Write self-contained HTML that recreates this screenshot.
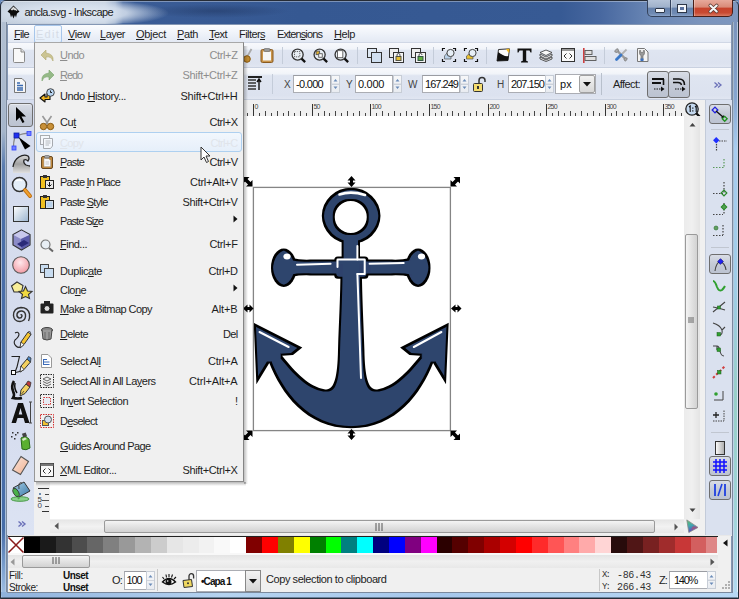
<!DOCTYPE html><html><head><meta charset="utf-8"><style>
*{margin:0;padding:0;box-sizing:border-box}
html,body{width:739px;height:599px;overflow:hidden;background:#6b8cbd}
body{position:relative;font-family:"Liberation Sans",sans-serif;font-size:11px;color:#000}
.a{position:absolute}
.t{position:absolute;white-space:nowrap;letter-spacing:-0.5px;line-height:13px;font-size:11px}
.u{text-decoration:underline}
svg{position:absolute;overflow:visible}
.tb{background:linear-gradient(#f7f8fc 0,#eef1f8 30%,#dde3f0 45%,#d9e0ee 100%)}
</style></head><body><div class="a" style="left:0px;top:0px;width:739px;height:599px;background:#3b5c96;border:1px solid #262c36;border-radius:6px 6px 0 0"></div>
<div class="a" style="left:1px;top:1px;width:737px;height:23px;background:linear-gradient(90deg,#c3cedc 0,#c6d1df 104px,#9db0cc 114px,#4a6aa0 122px,#3a5c96 134px,#355892 300px,#375a94 560px,#4868a0 600px,#6a87b5 650px,#7b94bc 700px,#7e97be 739px);border-radius:5px 5px 0 0"></div>
<div class="a" style="left:1px;top:1px;width:737px;height:1px;background:rgba(255,255,255,.35);border-radius:5px 5px 0 0"></div>
<div class="a" style="left:140px;top:4px;width:150px;height:14px;background:radial-gradient(ellipse at center,rgba(20,35,70,.35),rgba(20,35,70,0) 70%)"></div>
<div class="a" style="left:1px;top:22px;width:6px;height:576px;background:linear-gradient(#b2c0d2 0,#a5b5cb 19%,#5a7cb0 25%,#4a6ea8 32%,#466ca8 88%,#7ea2d0 95%,#a6c4e6 100%)"></div>
<div class="a" style="left:1px;top:22px;width:1px;height:576px;background:linear-gradient(#c0cad8,#9fb4d0 50%,#b8d0ec)"></div>
<div class="a" style="left:5px;top:22px;width:1px;height:576px;background:linear-gradient(#b8c4d4,#98aac2 50%,#b0c8e4)"></div>
<div class="a" style="left:6px;top:22px;width:1px;height:570px;background:#7b899d"></div>
<div class="a" style="left:732px;top:22px;width:6px;height:576px;background:linear-gradient(#7b94bc 0,#86a6d0 13%,#a8cdf0 22%,#a0cde8 45%,#98cfc8 65%,#a0d4d8 85%,#b4daf2 100%)"></div>
<div class="a" style="left:732px;top:22px;width:1px;height:570px;background:#7b899d"></div>
<div class="a" style="left:733px;top:22px;width:1px;height:576px;background:linear-gradient(#a0b4cc,#c8dcf0)"></div>
<div class="a" style="left:737px;top:22px;width:1px;height:576px;background:linear-gradient(#b8c8dc,#e6f2fc)"></div>
<div class="a" style="left:1px;top:592px;width:737px;height:6px;background:linear-gradient(90deg,#8fb2dc 0,#b5d3f0 30%,#a6c8ec 60%,#b8d8f4 100%);border-radius:0 0 4px 4px"></div>
<div class="a" style="left:7px;top:592px;width:726px;height:1px;background:#7b899d"></div>
<div class="a" style="left:1px;top:597px;width:737px;height:1px;background:rgba(40,50,70,.5)"></div>
<div class="a" style="left:2px;top:2px;width:200px;height:21px;background:radial-gradient(ellipse 95px 14px at 72px 11px,rgba(230,236,244,.95) 0,rgba(215,225,238,.85) 55%,rgba(190,205,225,0) 100%)"></div>
<svg style="left:7px;top:5px" width="13" height="14" viewBox="0 0 13 14"><path d="M6.5 0.5 L12.5 6.5 L10 8.5 L9 12.5 L8 10 L6.5 13.5 L5 10 L4 12.5 L3 8.5 L0.5 6.5Z" fill="#0c0c0c"/><path d="M6.5 1.5 L9.5 4.5 L8 5.5 L6.5 4.5 L5 5.5 L3.5 4.5Z" fill="#d8d8d8"/><path d="M8 3 L10.5 5.5 L9 5.8Z" fill="#fff"/></svg>
<div class="t" style="left:24.5px;top:6px;font-size:11px;letter-spacing:-0.588px;color:#1b1b1b;font-family:'Liberation Sans',sans-serif;font-weight:normal;">ancla.svg - Inkscape</div>
<div class="a" style="left:647px;top:0px;width:47px;height:17px;border:1px solid #34425c;border-top:none;border-radius:0 0 0 5px;background:linear-gradient(#b4c3d8 0,#9fb1ca 45%,#6681ab 50%,#6f8ab3 85%,#8ba3c8 100%)"></div>
<div class="a" style="left:693px;top:0px;width:40px;height:17px;border:1px solid #4a1e18;border-top:none;border-radius:0 0 5px 0;background:linear-gradient(#e7aa9c 0,#d98a78 45%,#c7432c 50%,#c94a32 80%,#d97a62 100%)"></div>
<div class="a" style="left:670px;top:0px;width:1px;height:16px;background:#34425c"></div>
<div class="a" style="left:671px;top:0px;width:1px;height:16px;background:rgba(255,255,255,.3)"></div>
<div class="a" style="left:694px;top:0px;width:1px;height:16px;background:rgba(255,255,255,.3)"></div>
<div class="a" style="left:655px;top:8px;width:10px;height:5px;background:#f4f6fa;border:1px solid #2c3648;border-radius:1px"></div>
<div class="a" style="left:678px;top:5px;width:8px;height:7px;border:2px solid #f4f6fa;outline:1px solid #2c3648;background:#5a72a0"></div>
<svg style="left:708px;top:4px" width="11" height="9" viewBox="0 0 11 9"><path d="M2.3 1.5 L8.7 7.5 M8.7 1.5 L2.3 7.5" stroke="#5a3a34" stroke-width="3.6" stroke-linecap="round"/><path d="M2.3 1.5 L8.7 7.5 M8.7 1.5 L2.3 7.5" stroke="#f6f6f6" stroke-width="2.1" stroke-linecap="round"/></svg>
<div class="a" style="left:7px;top:24px;width:725px;height:568px;background:#f0f0f0;border-left:1px solid #8497b4;border-top:1px solid #8497b4;border-right:1px solid #8497b4"></div>
<div class="a" style="left:8px;top:25px;width:723px;height:18px;background:linear-gradient(#fbfcfe,#eef2f9 50%,#e2e8f3 100%)"></div>
<div class="a" style="left:8px;top:42px;width:723px;height:1px;background:#d0d7e5"></div>
<div class="a" style="left:34px;top:25px;width:28px;height:18px;border:1px solid #a7c6ea;border-radius:2px;background:linear-gradient(#f4f8fd,#e4eefa)"></div>
<div class="t" style="left:14px;top:28px;font-size:11px;letter-spacing:-0.681px;color:#1e1e1e;font-family:'Liberation Sans',sans-serif;font-weight:normal;"><span class="u">F</span>ile</div>
<div class="t" style="left:36px;top:28px;font-size:11px;letter-spacing:1.261px;color:#d6dce6;font-family:'Liberation Sans',sans-serif;font-weight:normal;"><span class="u">E</span>dit</div>
<div class="t" style="left:68px;top:28px;font-size:11px;letter-spacing:-0.411px;color:#1e1e1e;font-family:'Liberation Sans',sans-serif;font-weight:normal;"><span class="u">V</span>iew</div>
<div class="t" style="left:100px;top:28px;font-size:11px;letter-spacing:-0.503px;color:#1e1e1e;font-family:'Liberation Sans',sans-serif;font-weight:normal;"><span class="u">L</span>ayer</div>
<div class="t" style="left:136px;top:28px;font-size:11px;letter-spacing:-0.298px;color:#1e1e1e;font-family:'Liberation Sans',sans-serif;font-weight:normal;"><span class="u">O</span>bject</div>
<div class="t" style="left:177px;top:28px;font-size:11px;letter-spacing:-0.407px;color:#1e1e1e;font-family:'Liberation Sans',sans-serif;font-weight:normal;"><span class="u">P</span>ath</div>
<div class="t" style="left:209px;top:28px;font-size:11px;letter-spacing:-0.543px;color:#1e1e1e;font-family:'Liberation Sans',sans-serif;font-weight:normal;"><span class="u">T</span>ext</div>
<div class="t" style="left:239px;top:28px;font-size:11px;letter-spacing:-0.563px;color:#1e1e1e;font-family:'Liberation Sans',sans-serif;font-weight:normal;">Filter<span class="u">s</span></div>
<div class="t" style="left:277px;top:28px;font-size:11px;letter-spacing:-0.881px;color:#1e1e1e;font-family:'Liberation Sans',sans-serif;font-weight:normal;">Exten<span class="u">s</span>ions</div>
<div class="t" style="left:334px;top:28px;font-size:11px;letter-spacing:-0.405px;color:#1e1e1e;font-family:'Liberation Sans',sans-serif;font-weight:normal;"><span class="u">H</span>elp</div>
<div class="a" style="left:8px;top:43px;width:723px;height:25px;background:linear-gradient(#f8f9fc 0,#f1f4f9 24%,#dfe5f1 30%,#dce2ef 80%,#e2e7f2 100%)"></div>
<div class="a" style="left:8px;top:67px;width:723px;height:1px;background:#c9d1e0"></div>
<div class="a" style="left:8px;top:68px;width:723px;height:32px;background:linear-gradient(#f8f9fc 0,#f1f4f9 18%,#dfe5f1 24%,#dce2ef 85%,#e2e7f2 100%)"></div>
<div class="a" style="left:8px;top:99px;width:723px;height:1px;background:#c9d1e0"></div>
<svg style="left:12px;top:48px" width="14" height="15" viewBox="0 0 14 15"><path d="M1.5 0.5 H9 L12.5 4 V13.5 Q12.5 14.5 11.5 14.5 H2.5 Q1.5 14.5 1.5 13.5 Z" fill="#f8f8f8" stroke="#8a8a8a"/><path d="M9 0.5 V4 H12.5" fill="#ddd" stroke="#8a8a8a"/></svg>
<svg style="left:243px;top:48px" width="9" height="15" viewBox="0 0 9 15"><path d="M8.5 1 L4 9" stroke="#aaa" stroke-width="1.8"/><circle cx="4" cy="11" r="3.3" fill="#c08a30" stroke="#8a5a10"/></svg>
<svg style="left:260px;top:48px" width="14" height="15" viewBox="0 0 14 15"><rect x="1" y="1.5" width="12" height="13" rx="1.5" fill="#c8944a" stroke="#8a5a20"/><rect x="3" y="3.5" width="8" height="9" fill="#f6f6f6"/><rect x="4" y="0.5" width="6" height="3" rx="1" fill="#999" stroke="#666" stroke-width=".6"/></svg>
<svg style="left:291px;top:48px" width="15" height="15" viewBox="0 0 17 17"><circle cx="7.5" cy="7.5" r="6.3" fill="#e8eef4" stroke="#333" stroke-width="1.5"/><path d="M12 12 L16 16" stroke="#111" stroke-width="2.6"/><rect x="4" y="4" width="6" height="6" fill="none" stroke="#555" stroke-dasharray="1.5 1"/></svg>
<svg style="left:313px;top:48px" width="15" height="15" viewBox="0 0 17 17"><circle cx="7.5" cy="7.5" r="6.3" fill="#e8eef4" stroke="#333" stroke-width="1.5"/><path d="M12 12 L16 16" stroke="#111" stroke-width="2.6"/><rect x="3.5" y="3.5" width="4" height="4" fill="#e0b030" stroke="#555"/><rect x="6.5" y="6.5" width="4" height="4" fill="#fff" stroke="#555"/></svg>
<svg style="left:334px;top:48px" width="15" height="15" viewBox="0 0 17 17"><circle cx="7.5" cy="7.5" r="6.3" fill="#e8eef4" stroke="#333" stroke-width="1.5"/><path d="M12 12 L16 16" stroke="#111" stroke-width="2.6"/><rect x="4" y="3" width="6" height="8" fill="#fff" stroke="#555"/></svg>
<div class="a" style="left:282px;top:47px;width:1px;height:17px;background:#c4ccd9"></div>
<div class="a" style="left:357px;top:47px;width:1px;height:17px;background:#c4ccd9"></div>
<div class="a" style="left:433px;top:47px;width:1px;height:17px;background:#c4ccd9"></div>
<div class="a" style="left:486px;top:47px;width:1px;height:17px;background:#c4ccd9"></div>
<div class="a" style="left:604px;top:47px;width:1px;height:17px;background:#c4ccd9"></div>
<svg style="left:367px;top:48px" width="15" height="15" viewBox="0 0 15 15"><rect x="0.5" y="0.5" width="9" height="9" fill="#dde7f2" stroke="#333"/><rect x="4.5" y="4.5" width="10" height="10" fill="#d0dff0" stroke="#333"/></svg>
<svg style="left:389px;top:48px" width="15" height="15" viewBox="0 0 15 15"><rect x="0.5" y="0.5" width="9" height="9" fill="#eee" stroke="#333"/><rect x="4.5" y="4.5" width="10" height="10" fill="#f4f4f4" stroke="#333"/><rect x="7" y="8.5" width="5" height="4" fill="#e8c030" stroke="#554"/><path d="M8 8.5 V7 A1.5 1.5 0 0 1 11 7 V8.5" fill="none" stroke="#333" stroke-width=".8"/></svg>
<svg style="left:411px;top:48px" width="15" height="15" viewBox="0 0 15 15"><rect x="0.5" y="0.5" width="9" height="9" fill="#eee" stroke="#333"/><rect x="4.5" y="4.5" width="10" height="10" fill="#f4f4f4" stroke="#333"/><rect x="7" y="8.5" width="5" height="4" fill="#60b040" stroke="#354"/><path d="M8 8.5 V7 A1.5 1.5 0 0 1 11 7" fill="none" stroke="#333" stroke-width=".8"/></svg>
<svg style="left:442px;top:48px" width="14" height="14" viewBox="0 0 14 14"><path d="M0.5 3 V0.5 H3 M11 0.5 H13.5 V3 M13.5 11 V13.5 H11 M3 13.5 H0.5 V11" stroke="#111" stroke-width="1.2" fill="none"/><path d="M2.5 8 L5 5 H9 V11 H2.5Z" fill="#b8d0e8" stroke="#555" stroke-width=".7"/><circle cx="8.5" cy="5" r="3.6" fill="#e6eef6" stroke="#444" stroke-width="1"/></svg>
<svg style="left:464px;top:48px" width="14" height="14" viewBox="0 0 14 14"><path d="M0.5 3 V0.5 H3 M11 0.5 H13.5 V3 M13.5 11 V13.5 H11 M3 13.5 H0.5 V11" stroke="#111" stroke-width="1.2" fill="none"/><path d="M2.5 8 L5 6 H9 V11 H2.5Z" fill="#e8c030" stroke="#555" stroke-width=".7"/><circle cx="8.5" cy="5" r="3.6" fill="#e6eef6" stroke="#444" stroke-width="1"/></svg>
<svg style="left:496px;top:48px" width="15" height="14" viewBox="0 0 15 14"><path d="M1 13 L2.5 1.5 L13.5 0.8 L12 12.5Z" fill="#fafafa" stroke="#333" stroke-width="1"/><path d="M1 13 L2.2 4 Q8 9 12.6 8 L12 12.5Z" fill="#111"/><path d="M10 1 L13.5 0.8 L13 5 Q11 3 10 1Z" fill="#f0b820"/></svg>
<svg style="left:517px;top:48px" width="15" height="15" viewBox="0 0 15 15"><path d="M0.5 0.5 H14.5 V4.5 H13.5 L12.5 2.5 H9.2 V12.8 L11 13.5 V14.5 H4 V13.5 L5.8 12.8 V2.5 H2.5 L1.5 4.5 H0.5Z" fill="#111"/></svg>
<svg style="left:539px;top:49px" width="14" height="13" viewBox="0 0 14 13"><path d="M1 8 L7 11 L13 8 V10 L7 12.5 L1 10Z" fill="#f0f0f0" stroke="#333" stroke-width=".8"/><path d="M1 5 L7 8 L13 5 V7 L7 10 L1 7Z" fill="#f0f0f0" stroke="#333" stroke-width=".8"/><path d="M1 3.5 L7 1 L13 3.5 L7 6.5Z" fill="#fafafa" stroke="#333" stroke-width=".8"/></svg>
<svg style="left:561px;top:48px" width="14" height="14" viewBox="0 0 14 14"><rect x="0.5" y="0.5" width="13" height="13" fill="#fafafa" stroke="#333"/><rect x="1" y="1" width="12" height="2" fill="#999"/><path d="M5.5 5.5 L3 8 L5.5 10.5 M8.5 5.5 L11 8 L8.5 10.5" fill="none" stroke="#333"/></svg>
<svg style="left:583px;top:48px" width="14" height="15" viewBox="0 0 14 15"><rect x="0" y="0" width="1.6" height="15" fill="#d04040"/><rect x="2" y="2.5" width="7" height="4" fill="#e0e0e0" stroke="#555" stroke-width=".9"/><rect x="2" y="8.5" width="11" height="4" fill="#e0e0e0" stroke="#555" stroke-width=".9"/></svg>
<svg style="left:614px;top:48px" width="15" height="14" viewBox="0 0 15 14"><path d="M2.5 2 L12 11.5" stroke="#9a9a9a" stroke-width="2.4"/><path d="M0.8 4 A3 3 0 0 1 4 0.8 L4.5 3 L3 4.5Z M11 13.2 A3 3 0 0 0 13.2 10 L11 9.8 L9.8 11Z" fill="#aaa" stroke="#777" stroke-width=".7"/><path d="M12.5 1.5 L7 7" stroke="#b0b0b0" stroke-width="1.8"/><path d="M7 7 L2.5 11.5" stroke="#3a78c8" stroke-width="2.8" stroke-linecap="round"/></svg>
<svg style="left:636px;top:48px" width="13" height="14" viewBox="0 0 13 14"><path d="M1.5 0.5 H8.5 L12 4 V13.5 H1.5Z" fill="#f4f4f4" stroke="#777"/><path d="M3.5 2.5 V5 Q3.5 7 5 7.5 V12 H7 V7.5 Q8.5 7 8.5 5 V2.5 L7.2 2.5 V4.5 H4.8 V2.5Z" fill="#999" stroke="#666" stroke-width=".6"/><rect x="4.5" y="10.5" width="3" height="2.5" fill="#3a70c0"/></svg>
<svg style="left:13px;top:77px" width="14" height="17" viewBox="0 0 14 17"><path d="M1.5 1.5 H9 L12.5 5 V15.5 H1.5Z" fill="#f6f6f6" stroke="#777"/><path d="M4 6 H7 M4 8.5 H10 M4 11 H10 M4 13 H10" stroke="#3a6ab0" stroke-width="1.6"/></svg>
<svg style="left:248px;top:76px" width="14" height="15" viewBox="0 0 14 15"><rect x="0" y="0" width="14" height="2" fill="#222"/><path d="M0 4 H8 M0 7 H8 M0 10 H8 M0 13 H8" stroke="#333" stroke-width="1.6"/><path d="M11 14 V4 M9 6 L11 3 L13 6" stroke="#111" stroke-width="1.4" fill="none"/></svg>
<div class="a" style="left:272px;top:74px;width:1px;height:20px;background:#c4ccd9"></div>
<div class="t" style="left:284px;top:78px;font-size:10px;letter-spacing:-0.670px;color:#444;font-family:'Liberation Sans',sans-serif;font-weight:normal;">X</div>
<div class="a" style="left:293px;top:75px;width:38px;height:18px;background:#fff;border:1px solid #abadb3;border-top-color:#9a9ca2"></div>
<div class="t" style="left:296px;top:78px;font-size:11px;letter-spacing:-0.698px;color:#111;font-family:'Liberation Sans',sans-serif;font-weight:normal;">-0.000</div>
<div class="a" style="left:331px;top:75px;width:9px;height:18px;border:1px solid #c7cdd6;background:linear-gradient(#f6f7f9,#e9ecf1)"></div>
<div class="a" style="left:331px;top:84px;width:9px;height:1px;background:#c7cdd6"></div>
<svg style="left:332px;top:77px" width="7" height="14" viewBox="0 0 7 14"><path d="M1.5 4.5 L3.5 2 L5.5 4.5Z M1.5 9.5 L3.5 12 L5.5 9.5Z" fill="#6a8bb8"/><path d="M0 7.0 H7" stroke="#d0d5dd"/></svg>
<div class="t" style="left:346px;top:78px;font-size:10px;letter-spacing:-0.670px;color:#444;font-family:'Liberation Sans',sans-serif;font-weight:normal;">Y</div>
<div class="a" style="left:355px;top:75px;width:38px;height:18px;background:#fff;border:1px solid #abadb3;border-top-color:#9a9ca2"></div>
<div class="t" style="left:358px;top:78px;font-size:11px;letter-spacing:-0.305px;color:#111;font-family:'Liberation Sans',sans-serif;font-weight:normal;">0.000</div>
<div class="a" style="left:393px;top:75px;width:9px;height:18px;border:1px solid #c7cdd6;background:linear-gradient(#f6f7f9,#e9ecf1)"></div>
<div class="a" style="left:393px;top:84px;width:9px;height:1px;background:#c7cdd6"></div>
<svg style="left:394px;top:77px" width="7" height="14" viewBox="0 0 7 14"><path d="M1.5 4.5 L3.5 2 L5.5 4.5Z M1.5 9.5 L3.5 12 L5.5 9.5Z" fill="#6a8bb8"/><path d="M0 7.0 H7" stroke="#d0d5dd"/></svg>
<div class="t" style="left:408px;top:78px;font-size:10px;letter-spacing:0.561px;color:#444;font-family:'Liberation Sans',sans-serif;font-weight:normal;">W</div>
<div class="a" style="left:422px;top:75px;width:38px;height:18px;background:#fff;border:1px solid #abadb3;border-top-color:#9a9ca2"></div>
<div class="t" style="left:425px;top:78px;font-size:11px;letter-spacing:-0.966px;color:#111;font-family:'Liberation Sans',sans-serif;font-weight:normal;">167.249</div>
<div class="a" style="left:460px;top:75px;width:9px;height:18px;border:1px solid #c7cdd6;background:linear-gradient(#f6f7f9,#e9ecf1)"></div>
<div class="a" style="left:460px;top:84px;width:9px;height:1px;background:#c7cdd6"></div>
<svg style="left:461px;top:77px" width="7" height="14" viewBox="0 0 7 14"><path d="M1.5 4.5 L3.5 2 L5.5 4.5Z M1.5 9.5 L3.5 12 L5.5 9.5Z" fill="#6a8bb8"/><path d="M0 7.0 H7" stroke="#d0d5dd"/></svg>
<svg style="left:473px;top:76px" width="13" height="16" viewBox="0 0 13 16"><path d="M6 8 V4.5 A3 3 0 0 1 12 4.5 V6" fill="none" stroke="#333" stroke-width="1.5"/><rect x="0.5" y="7.5" width="9" height="8" rx="1" fill="#f4dc70" stroke="#333"/><rect x="4" y="10" width="2" height="3" fill="#333"/></svg>
<div class="t" style="left:497px;top:78px;font-size:10px;letter-spacing:-0.222px;color:#444;font-family:'Liberation Sans',sans-serif;font-weight:normal;">H</div>
<div class="a" style="left:508px;top:75px;width:38px;height:18px;background:#fff;border:1px solid #abadb3;border-top-color:#9a9ca2"></div>
<div class="t" style="left:511px;top:78px;font-size:11px;letter-spacing:-0.966px;color:#111;font-family:'Liberation Sans',sans-serif;font-weight:normal;">207.150</div>
<div class="a" style="left:545px;top:75px;width:9px;height:18px;border:1px solid #c7cdd6;background:linear-gradient(#f6f7f9,#e9ecf1)"></div>
<div class="a" style="left:545px;top:84px;width:9px;height:1px;background:#c7cdd6"></div>
<svg style="left:546px;top:77px" width="7" height="14" viewBox="0 0 7 14"><path d="M1.5 4.5 L3.5 2 L5.5 4.5Z M1.5 9.5 L3.5 12 L5.5 9.5Z" fill="#6a8bb8"/><path d="M0 7.0 H7" stroke="#d0d5dd"/></svg>
<div class="a" style="left:555px;top:74px;width:41px;height:20px;background:#fff;border:1px solid #abadb3"></div>
<div class="t" style="left:560px;top:78px;font-size:11px;letter-spacing:0.191px;color:#111;font-family:'Liberation Sans',sans-serif;font-weight:normal;">px</div>
<div class="a" style="left:579px;top:75px;width:16px;height:18px;border:1px solid #a0a0a0;background:linear-gradient(#f2f2f2,#d8d8d8);border-radius:2px"></div>
<svg style="left:583px;top:82px" width="8" height="5" viewBox="0 0 8 5"><path d="M0 0 H8 L4 4.5Z" fill="#111"/></svg>
<div class="a" style="left:601px;top:73px;width:1px;height:22px;background:#b8c0cc"></div>
<div class="t" style="left:613px;top:78px;font-size:11px;letter-spacing:-0.569px;color:#222;font-family:'Liberation Sans',sans-serif;font-weight:normal;">Affect:</div>
<div class="a" style="left:647px;top:71px;width:22px;height:27px;border:1px solid #6e6e6e;border-radius:3px;background:linear-gradient(#d9dde6,#c4cad6 50%,#bcc3d1)"></div>
<div class="a" style="left:668px;top:71px;width:22px;height:27px;border:1px solid #6e6e6e;border-radius:3px;background:linear-gradient(#d9dde6,#c4cad6 50%,#bcc3d1)"></div>
<svg style="left:651px;top:77px" width="15" height="16" viewBox="0 0 15 16"><path d="M1 2 H13 M1 6 H10" stroke="#111" stroke-width="2"/><path d="M12.5 2 V8" stroke="#111" stroke-width="1.6"/><path d="M3 12 H10" stroke="#111" stroke-dasharray="1.5 1" stroke-width="1.2"/><path d="M10 9.5 L13.5 12 L10 14.5Z" fill="#111"/></svg>
<svg style="left:672px;top:77px" width="15" height="16" viewBox="0 0 15 16"><path d="M1 2 H7 Q12.5 2 12.5 8" stroke="#111" stroke-width="1.6" fill="none"/><path d="M1 5.5 H6 Q9 5.5 9.5 8" stroke="#111" stroke-width="1.4" fill="none"/><path d="M3 12 H10" stroke="#111" stroke-dasharray="1.5 1" stroke-width="1.2"/><path d="M10 9.5 L13.5 12 L10 14.5Z" fill="#111"/></svg>
<svg style="left:714px;top:82px" width="8" height="6" viewBox="0 0 8 6"><path d="M0.5 0.5 L3.5 3 L0.5 5.5 M4 0.5 L7 3 L4 5.5" stroke="#6a70b8" stroke-width="1.3" fill="none"/></svg>
<div class="a" style="left:7px;top:100px;width:27px;height:435px;background:linear-gradient(#d6ddee,#d5dcee 70%,#dce3f3)"></div>
<div class="a" style="left:8px;top:103px;width:25px;height:24px;border:1px solid #6e6e6e;border-radius:3px;background:linear-gradient(#d9dde6,#c4cad6 50%,#bcc3d1);box-shadow:inset 0 1px 0 rgba(255,255,255,.4)"></div>
<svg style="left:14px;top:106px" width="14" height="18" viewBox="0 0 14 18"><path d="M2 1 L2 15 L5.5 11.5 L8.5 17 L10.5 16 L7.5 10.5 L12 10.5Z" fill="#000"/></svg>
<svg style="left:11px;top:131px" width="22" height="20" viewBox="0 0 22 20"><path d="M2.5 16 Q2.5 6 6 4.5 Q12 2.5 18 2" fill="none" stroke="#888" stroke-width="1.3"/><rect x="3" y="2" width="5" height="5" fill="#2030f0" stroke="#1020a0" stroke-width=".8"/><rect x="16" y="0.5" width="4" height="4" fill="#7080ff" stroke="#3040ff" stroke-width=".8"/><rect x="1" y="15" width="4" height="4" fill="#7080ff" stroke="#3040ff" stroke-width=".8"/><path d="M7.5 6 L19.5 15 L14 18.5 Z" fill="#000"/></svg>
<svg style="left:12px;top:153px" width="19" height="21" viewBox="0 0 19 21"><defs><linearGradient id="gw" x1="0" y1="0" x2="0" y2="1"><stop offset="0" stop-color="#d8d8d8"/><stop offset=".5" stop-color="#a0a0a0"/><stop offset="1" stop-color="#e0e0e0"/></linearGradient></defs><path d="M1 14 Q2 7 7 4 Q12 1 16 3 Q18 5 16 8 Q14 6 12 7 Q11 10 14 12 Q17 13 18 13 V20 H1Z" fill="url(#gw)"/><path d="M1 14 Q2 7 7 4 Q12 1 16 3 Q18 5 16 8 Q14 6 12 7 Q11 10 14 12 Q17 13 18 13" fill="none" stroke="#222" stroke-width="1.3"/></svg>
<svg style="left:11px;top:176px" width="21" height="23" viewBox="0 0 21 23"><circle cx="8.5" cy="8.5" r="7" fill="#e4eef8" stroke="#333" stroke-width="1.5"/><path d="M5 5 Q8 3 11 5" stroke="#fff" stroke-width="1.5" fill="none"/><path d="M14 14 L19 20" stroke="#c07010" stroke-width="4" stroke-linecap="round"/><path d="M14 14 L19 20" stroke="#f0a030" stroke-width="2" stroke-linecap="round"/></svg>
<svg style="left:12px;top:205px" width="18" height="18" viewBox="0 0 18 18"><rect x="1.5" y="1.5" width="15" height="15" fill="url(#gr)" stroke="#333"/><defs><linearGradient id="gr" x1="0" y1="0" x2="1" y2="1"><stop offset="0" stop-color="#fff"/><stop offset="1" stop-color="#9bb5d0"/></linearGradient></defs></svg>
<svg style="left:12px;top:229px" width="19" height="22" viewBox="0 0 19 22"><path d="M9.5 1 L18 5.5 L18 16 L9.5 21 L1 16 L1 5.5Z" fill="#8c8cc8" stroke="#333" stroke-width="1.2"/><path d="M1.5 6 L9 10 L17.5 6 L9.5 1.5Z" fill="#c8c8ec"/><path d="M9 10 L17.5 6 V16 L9.5 20.5Z" fill="#5a5aa8"/><path d="M5 15 L12 11 L17 14 L9.5 18Z" fill="#2a2a78"/></svg>
<svg style="left:11px;top:255px" width="20" height="20" viewBox="0 0 20 20"><defs><radialGradient id="gc" cx=".45" cy=".35" r=".75"><stop offset="0" stop-color="#ffe8ec"/><stop offset="1" stop-color="#f0909a"/></radialGradient></defs><circle cx="10" cy="10" r="8.3" fill="url(#gc)" stroke="#555" stroke-width="1.1"/></svg>
<svg style="left:10px;top:281px" width="23" height="18" viewBox="0 0 23 18"><path d="M7 1 L13 4.5 L11.5 11 L4 11 L1.5 5Z" fill="#f8ee98" stroke="#333" stroke-width="1.1"/><path d="M15.5 5.5 L17.5 10 L22 10.5 L18.5 13.5 L19.5 17.5 L15.5 15.5 L11.5 17.5 L12.5 13.5 L9 10.5 L13.5 10Z" fill="#f0d840" stroke="#333" stroke-width="1.1"/></svg>
<svg style="left:10px;top:305px" width="21" height="20" viewBox="0 0 21 20"><path d="M10.5 10 Q12 9 12 11 Q11.5 13.5 9 13 Q6.5 12 7 9 Q8 5.5 12 6 Q16 7 15.5 11.5 Q15 16 10 16.5 Q4 16.5 3.5 10.5 Q3.5 3 11 2.5 Q18 2.5 19.5 9 Q20 13 18.5 16" fill="none" stroke="#333" stroke-width="1.4"/></svg>
<svg style="left:11px;top:329px" width="20" height="22" viewBox="0 0 20 22"><path d="M4 4 Q7 2 8 5 Q8 8 4 11 Q2 14 5 17 Q7 19 10 18" fill="none" stroke="#222" stroke-width="1.1"/><path d="M9 19 L10 13 L17 3 L20 5.5 L13 15.5Z" fill="#f4c430" stroke="#333" stroke-width="1"/><path d="M9 19 L10 13 L13 15.5Z" fill="#fff" stroke="#333" stroke-width=".8"/><path d="M17 3 L20 5.5 L19 2.5Z" fill="#f0f0f0" stroke="#333" stroke-width=".8"/></svg>
<svg style="left:10px;top:355px" width="22" height="21" viewBox="0 0 22 21"><path d="M1.5 1.5 H9.5 L7 12 Q6 16 4 17" fill="none" stroke="#222" stroke-width="1.1"/><rect x="1.5" y="15.5" width="4" height="4" fill="#fff" stroke="#111"/><path d="M5.5 17.5 L12 16" stroke="#222" stroke-width="1.2"/><path d="M10 17 L11 11 L17 4 L20.5 7 L14 14.5Z" fill="#f2d060" stroke="#333" stroke-width="1"/><path d="M17 4 L20.5 7 L21 3 L18.5 1.5Z" fill="#4a88c8" stroke="#333" stroke-width=".8"/><path d="M10 17 L11 11 L14 14.5Z" fill="#fff" stroke="#333" stroke-width=".8"/></svg>
<svg style="left:10px;top:380px" width="22" height="20" viewBox="0 0 22 20"><path d="M4 1 Q1 6 3 11 Q5 15 3 18 Q8 19 12 18" fill="none" stroke="#111" stroke-width="2.6"/><path d="M5 3 Q4 9 7 13" fill="none" stroke="#111" stroke-width="1.5"/><path d="M10 16 L11 10 L16 4 L20 7 L15 13.5Z" fill="#f2d060" stroke="#333" stroke-width="1"/><path d="M16 4 L20 7 L21 2.5 L18 1Z" fill="#c03a3a" stroke="#333" stroke-width=".8"/><path d="M11.5 14 L14 11" stroke="#333" stroke-width=".8"/></svg>
<svg style="left:11px;top:400px" width="21" height="25" viewBox="0 0 21 25"><path d="M0.5 23 L7 3 H12 L18.5 23 H14 L12.5 18 H6.5 L5 23Z M7.7 14.5 H11.3 L9.5 8Z" fill="#111"/><path d="M19.5 2 V23 M18 2 H21 M18 23 H21" stroke="#444" stroke-width="1"/></svg>
<svg style="left:10px;top:431px" width="21" height="20" viewBox="0 0 21 20"><g fill="#333"><rect x="2" y="1" width="1.5" height="1.5"/><rect x="5" y="3" width="1.5" height="1.5"/><rect x="1" y="5" width="1.5" height="1.5"/><rect x="4" y="7" width="1.5" height="1.5"/><rect x="7" y="1" width="1.5" height="1.5"/></g><path d="M11 7 L15 5 L19 8 L20 17 Q16 20 12 18 Z" fill="#5ab030" stroke="#2a6a1a" stroke-width="1"/><path d="M12 8 L15 6.5 L17 8 L13 10Z" fill="#d8e8c8"/><rect x="12.5" y="2" width="4" height="4" fill="#444" transform="rotate(-20 14.5 4)"/></svg>
<svg style="left:11px;top:455px" width="19" height="21" viewBox="0 0 19 21"><defs><linearGradient id="ge" x1="0" y1="0" x2="1" y2="1"><stop offset="0" stop-color="#fbe6dc"/><stop offset="1" stop-color="#f0b090"/></linearGradient></defs><path d="M10 1.5 L17.5 6.5 L9.5 19.5 L1.5 15Z" fill="url(#ge)" stroke="#555" stroke-width="1.1"/></svg>
<svg style="left:10px;top:480px" width="21" height="22" viewBox="0 0 21 22"><defs><linearGradient id="gb" x1="0" y1="0" x2="1" y2="1"><stop offset="0" stop-color="#a8d0e8"/><stop offset="1" stop-color="#3a78a8"/></linearGradient></defs><ellipse cx="10" cy="19" rx="9" ry="2.3" fill="#8ad08a" stroke="#4a9a4a" stroke-width="1"/><path d="M3 8 L14 2 L20 11 L9 17Z" fill="url(#gb)" stroke="#333" stroke-width="1"/><ellipse cx="6" cy="12.5" rx="2.5" ry="4.5" transform="rotate(-30 6 12.5)" fill="#4ab04a" stroke="#333" stroke-width=".8"/><path d="M8 17 Q9 19 9 19" stroke="#4ab04a" stroke-width="2"/><path d="M9 9 Q8 1 12 3" fill="none" stroke="#444" stroke-width="1"/></svg>
<svg style="left:18px;top:521px" width="8" height="6" viewBox="0 0 8 6"><path d="M0.5 0.5 L3.5 3 L0.5 5.5 M4 0.5 L7 3 L4 5.5" stroke="#6a70b8" stroke-width="1.4" fill="none"/></svg>
<div class="a" style="left:34px;top:100px;width:650px;height:16px;background:#f0f0f0"></div>
<div class="a" style="left:34px;top:116px;width:16px;height:403px;background:#f0f0f0"></div>
<svg style="left:0;top:0" width="739" height="599"><rect x="218" y="111" width="1" height="5" fill="#444"/><rect x="224" y="113" width="1" height="3" fill="#444"/><rect x="230" y="111" width="1" height="5" fill="#444"/><rect x="236" y="113" width="1" height="3" fill="#444"/><rect x="242" y="111" width="1" height="5" fill="#444"/><rect x="247" y="113" width="1" height="3" fill="#444"/><rect x="253" y="104" width="1" height="12" fill="#333"/><rect x="259" y="113" width="1" height="3" fill="#444"/><rect x="265" y="111" width="1" height="5" fill="#444"/><rect x="271" y="113" width="1" height="3" fill="#444"/><rect x="277" y="111" width="1" height="5" fill="#444"/><rect x="283" y="113" width="1" height="3" fill="#444"/><rect x="288" y="111" width="1" height="5" fill="#444"/><rect x="294" y="113" width="1" height="3" fill="#444"/><rect x="300" y="111" width="1" height="5" fill="#444"/><rect x="306" y="113" width="1" height="3" fill="#444"/><rect x="312" y="104" width="1" height="12" fill="#333"/><rect x="318" y="113" width="1" height="3" fill="#444"/><rect x="324" y="111" width="1" height="5" fill="#444"/><rect x="329" y="113" width="1" height="3" fill="#444"/><rect x="335" y="111" width="1" height="5" fill="#444"/><rect x="341" y="113" width="1" height="3" fill="#444"/><rect x="347" y="111" width="1" height="5" fill="#444"/><rect x="353" y="113" width="1" height="3" fill="#444"/><rect x="359" y="111" width="1" height="5" fill="#444"/><rect x="365" y="113" width="1" height="3" fill="#444"/><rect x="370" y="104" width="1" height="12" fill="#333"/><rect x="376" y="113" width="1" height="3" fill="#444"/><rect x="382" y="111" width="1" height="5" fill="#444"/><rect x="388" y="113" width="1" height="3" fill="#444"/><rect x="394" y="111" width="1" height="5" fill="#444"/><rect x="400" y="113" width="1" height="3" fill="#444"/><rect x="406" y="111" width="1" height="5" fill="#444"/><rect x="411" y="113" width="1" height="3" fill="#444"/><rect x="417" y="111" width="1" height="5" fill="#444"/><rect x="423" y="113" width="1" height="3" fill="#444"/><rect x="429" y="104" width="1" height="12" fill="#333"/><rect x="435" y="113" width="1" height="3" fill="#444"/><rect x="441" y="111" width="1" height="5" fill="#444"/><rect x="447" y="113" width="1" height="3" fill="#444"/><rect x="452" y="111" width="1" height="5" fill="#444"/><rect x="458" y="113" width="1" height="3" fill="#444"/><rect x="464" y="111" width="1" height="5" fill="#444"/><rect x="470" y="113" width="1" height="3" fill="#444"/><rect x="476" y="111" width="1" height="5" fill="#444"/><rect x="482" y="113" width="1" height="3" fill="#444"/><rect x="488" y="104" width="1" height="12" fill="#333"/><rect x="493" y="113" width="1" height="3" fill="#444"/><rect x="499" y="111" width="1" height="5" fill="#444"/><rect x="505" y="113" width="1" height="3" fill="#444"/><rect x="511" y="111" width="1" height="5" fill="#444"/><rect x="517" y="113" width="1" height="3" fill="#444"/><rect x="523" y="111" width="1" height="5" fill="#444"/><rect x="529" y="113" width="1" height="3" fill="#444"/><rect x="534" y="111" width="1" height="5" fill="#444"/><rect x="540" y="113" width="1" height="3" fill="#444"/><rect x="546" y="104" width="1" height="12" fill="#333"/><rect x="552" y="113" width="1" height="3" fill="#444"/><rect x="558" y="111" width="1" height="5" fill="#444"/><rect x="564" y="113" width="1" height="3" fill="#444"/><rect x="570" y="111" width="1" height="5" fill="#444"/><rect x="575" y="113" width="1" height="3" fill="#444"/><rect x="581" y="111" width="1" height="5" fill="#444"/><rect x="587" y="113" width="1" height="3" fill="#444"/><rect x="593" y="111" width="1" height="5" fill="#444"/><rect x="599" y="113" width="1" height="3" fill="#444"/><rect x="605" y="104" width="1" height="12" fill="#333"/><rect x="611" y="113" width="1" height="3" fill="#444"/><rect x="616" y="111" width="1" height="5" fill="#444"/><rect x="622" y="113" width="1" height="3" fill="#444"/><rect x="628" y="111" width="1" height="5" fill="#444"/><rect x="634" y="113" width="1" height="3" fill="#444"/><rect x="640" y="111" width="1" height="5" fill="#444"/><rect x="646" y="113" width="1" height="3" fill="#444"/><rect x="652" y="111" width="1" height="5" fill="#444"/><rect x="657" y="113" width="1" height="3" fill="#444"/><rect x="663" y="104" width="1" height="12" fill="#333"/><rect x="669" y="113" width="1" height="3" fill="#444"/><rect x="675" y="111" width="1" height="5" fill="#444"/><rect x="681" y="113" width="1" height="3" fill="#444"/></svg>
<div class="t" style="left:254.5px;top:100px;font-size:7px;letter-spacing:-0.794px;color:#444;font-family:'Liberation Sans',sans-serif;font-weight:normal;">0</div>
<div class="t" style="left:313.5px;top:100px;font-size:7px;letter-spacing:-0.794px;color:#444;font-family:'Liberation Sans',sans-serif;font-weight:normal;">50</div>
<div class="t" style="left:371.5px;top:100px;font-size:7px;letter-spacing:-0.794px;color:#444;font-family:'Liberation Sans',sans-serif;font-weight:normal;">100</div>
<div class="t" style="left:430.5px;top:100px;font-size:7px;letter-spacing:-0.794px;color:#444;font-family:'Liberation Sans',sans-serif;font-weight:normal;">150</div>
<div class="t" style="left:489.5px;top:100px;font-size:7px;letter-spacing:-0.794px;color:#444;font-family:'Liberation Sans',sans-serif;font-weight:normal;">200</div>
<div class="t" style="left:547.5px;top:100px;font-size:7px;letter-spacing:-0.794px;color:#444;font-family:'Liberation Sans',sans-serif;font-weight:normal;">250</div>
<div class="t" style="left:606.5px;top:100px;font-size:7px;letter-spacing:-0.794px;color:#444;font-family:'Liberation Sans',sans-serif;font-weight:normal;">300</div>
<div class="t" style="left:664.5px;top:100px;font-size:7px;letter-spacing:-0.794px;color:#444;font-family:'Liberation Sans',sans-serif;font-weight:normal;">350</div>
<div class="a" style="left:38px;top:488px;width:11px;height:1px;background:#333"></div>
<div class="a" style="left:45px;top:494px;width:4px;height:1px;background:#444"></div>
<div class="a" style="left:42px;top:500px;width:7px;height:1px;background:#555"></div>
<div class="a" style="left:45px;top:506px;width:4px;height:1px;background:#444"></div>
<div class="a" style="left:42px;top:511px;width:7px;height:1px;background:#333"></div>
<div class="a" style="left:39px;top:493px;width:2px;height:2px;background:#6a8ab0"></div>
<div class="t" style="left:37.5px;top:495.5px;font-size:8px;color:#333;line-height:8px">5</div>
<div class="t" style="left:37.5px;top:502px;font-size:8px;color:#445;line-height:8px">0</div>
<svg style="left:685px;top:102px" width="16" height="16" viewBox="0 0 16 16"><circle cx="7" cy="7" r="6.2" fill="#c4d8ee" stroke="#222" stroke-width="1.3"/><path d="M11 11 L14.5 14.5" stroke="#111" stroke-width="2.4"/><path d="M4 5 L5.2 4 V10 M10 5 L11.2 4 V10" stroke="#111" stroke-width="1.1" fill="none"/><rect x="7.2" y="5.5" width="1.2" height="1.2" fill="#111"/><rect x="7.2" y="8.3" width="1.2" height="1.2" fill="#111"/></svg>
<div class="a" style="left:50px;top:116px;width:634px;height:403px;background:#fff"></div>
<div class="a" style="left:684px;top:116px;width:18px;height:403px;background:#f0f0f0"></div>
<div class="a" style="left:684px;top:116px;width:16px;height:403px;background:linear-gradient(90deg,#ececec,#f0f0f0 50%,#e4e4e4)"></div>
<svg style="left:689px;top:122px" width="7" height="5" viewBox="0 0 7 5"><path d="M0.5 4.5 L3.5 1 L6.5 4.5Z" fill="#444"/></svg>
<svg style="left:689px;top:508px" width="7" height="5" viewBox="0 0 7 5"><path d="M0.5 0.5 L3.5 4 L6.5 0.5Z" fill="#444"/></svg>
<div class="a" style="left:685px;top:234px;width:13px;height:175px;border:1px solid #9a9a9a;border-radius:2px;background:linear-gradient(90deg,#f4f4f4,#e4e4e4 45%,#d2d2d2 100%)"></div>
<svg style="left:688px;top:317px" width="6" height="7" viewBox="0 0 6 7"><path d="M0 1 H6 M0 3 H6 M0 5 H6" stroke="#666"/></svg>
<div class="a" style="left:50px;top:519px;width:634px;height:16px;background:#f0f0f0"></div>
<div class="a" style="left:50px;top:520px;width:634px;height:13px;background:linear-gradient(#e6e6e6,#f2f2f2 50%,#e6e6e6)"></div>
<svg style="left:54px;top:522px" width="5" height="8" viewBox="0 0 5 8"><path d="M4.5 0.5 L0.5 4 L4.5 7.5Z" fill="#555"/></svg>
<svg style="left:674px;top:523px" width="5" height="8" viewBox="0 0 5 8"><path d="M0.5 0.5 L4 4 L0.5 7.5Z" fill="#555"/></svg>
<div class="a" style="left:104px;top:520px;width:551px;height:13px;border:1px solid #9a9a9a;border-radius:2px;background:linear-gradient(#f4f4f4,#e4e4e4 45%,#d2d2d2)"></div>
<svg style="left:375px;top:523px" width="9" height="8" viewBox="0 0 9 8"><path d="M1 0 V8 M4 0 V8 M7 0 V8" stroke="#555"/></svg>
<svg style="left:685px;top:518px" width="15" height="16" viewBox="0 0 15 16"><defs><linearGradient id="gcm1" x1="0" y1="0" x2="0.3" y2="1"><stop offset="0" stop-color="#60c060"/><stop offset=".5" stop-color="#40a8b0"/><stop offset="1" stop-color="#6040c0"/></linearGradient></defs><path d="M1.8 1.9 L13 9.4 L3.8 14.5Z" fill="url(#gcm1)" stroke="#888" stroke-width=".8"/><path d="M8 8 L13 9.4 L6 12Z" fill="#d04060" opacity=".55"/></svg>
<div class="a" style="left:705px;top:100px;width:27px;height:435px;background:#dae1ef;border-left:1px solid #c3cbd9"></div>
<div class="a" style="left:709px;top:104px;width:22px;height:20px;border:1px solid #6e6e6e;border-radius:3px;background:linear-gradient(#d9dde6,#c4cad6 50%,#bcc3d1)"></div>
<svg style="left:712px;top:107px" width="16" height="15" viewBox="0 0 16 15"><rect x="1" y="1" width="4" height="4" fill="none" stroke="#2020e0" stroke-width="1.3" transform="rotate(45 3 3)"/><path d="M4 4 L11 10" stroke="#111" stroke-width="1.4"/><path d="M9 11 L12 11 L12 8Z" fill="#111"/><rect x="11" y="10" width="3.5" height="3.5" fill="none" stroke="#209020" stroke-width="1.3" transform="rotate(45 12.7 11.7)"/></svg>
<div class="a" style="left:711px;top:129px;width:18px;height:1px;background:#c0c6d0"></div>
<svg style="left:711px;top:135px" width="18" height="18" viewBox="0 0 18 18"><rect x="3" y="3" width="4.5" height="4.5" fill="#2030ff" transform="rotate(45 5.25 5.25)"/><path d="M8 6 H16 M5.5 9 V16" stroke="#444" stroke-dasharray="1.5 1" stroke-width="1.2"/></svg>
<svg style="left:711px;top:155px" width="18" height="18" viewBox="0 0 18 18"><path d="M2 12.5 H13 M13 4 V12" stroke="#5a9a5a" stroke-dasharray="1.5 1.5" stroke-width="1.2" fill="none"/></svg>
<svg style="left:711px;top:178px" width="18" height="18" viewBox="0 0 18 18"><path d="M2 15.5 H12 M13 4 V15" stroke="#444" stroke-dasharray="1.5 1.5" stroke-width="1.2" fill="none"/><rect x="11" y="13" width="4" height="4" fill="none" stroke="#2a8a2a" stroke-width="1.2" transform="rotate(45 13 15)"/></svg>
<svg style="left:711px;top:199px" width="18" height="18" viewBox="0 0 18 18"><path d="M2 15.5 H12 M13 4 V15" stroke="#444" stroke-dasharray="1.5 1.5" stroke-width="1.2" fill="none"/><rect x="11" y="6" width="4" height="4" fill="#50a050" stroke="#2a8a2a" stroke-width="1" transform="rotate(45 13 8)"/></svg>
<svg style="left:711px;top:221px" width="18" height="18" viewBox="0 0 18 18"><circle cx="5" cy="7" r="2" fill="#60a060" stroke="#2a6a2a" stroke-width=".6"/><path d="M2 14.5 H12 M12 4 V14" stroke="#444" stroke-dasharray="1.5 1.5" stroke-width="1.2" fill="none"/></svg>
<div class="a" style="left:711px;top:247px;width:18px;height:1px;background:#c0c6d0"></div>
<div class="a" style="left:709px;top:254px;width:22px;height:20px;border:1px solid #6e6e6e;border-radius:3px;background:linear-gradient(#d9dde6,#c4cad6 50%,#bcc3d1)"></div>
<svg style="left:712px;top:257px" width="16" height="16" viewBox="0 0 16 16"><path d="M3 14 Q4 6 8 4.5 Q13 6 14 13" fill="none" stroke="#444" stroke-width="1.1"/><rect x="6.5" y="2.5" width="4" height="4" fill="#2020f0" stroke="#000080" stroke-width=".6" transform="rotate(45 8.5 4.5)"/></svg>
<svg style="left:711px;top:278px" width="16" height="16" viewBox="0 0 16 16"><path d="M2 3 Q4 3 6 9 Q8 14 11 12 Q13 10 14 8" fill="none" stroke="#30a030" stroke-width="2"/></svg>
<svg style="left:711px;top:299px" width="16" height="16" viewBox="0 0 16 16"><path d="M2 13 L14 3 M2 8 Q8 9 14 11" stroke="#444" fill="none" stroke-width="1.1"/><rect x="6.5" y="7" width="3" height="3" fill="#30a030" stroke="#1a5a1a" stroke-width=".5"/></svg>
<svg style="left:711px;top:321px" width="16" height="18" viewBox="0 0 16 18"><path d="M2 2 Q9 4 11 9 Q12 14 8 14 M11 9 Q13 7 14 6" fill="none" stroke="#444" stroke-width="1.1"/><rect x="6" y="11.5" width="3.5" height="3.5" fill="#30a030" stroke="#1a5a1a" stroke-width=".5"/></svg>
<svg style="left:711px;top:343px" width="16" height="16" viewBox="0 0 16 16"><path d="M2 3 H6 Q8 3 9 8 Q10 13 13 13 M6 3 V7" fill="none" stroke="#444" stroke-width="1.1"/><rect x="6" y="5" width="3.5" height="3.5" fill="#30a030" stroke="#1a5a1a" stroke-width=".5"/></svg>
<svg style="left:711px;top:364px" width="16" height="16" viewBox="0 0 16 16"><path d="M2 14 L14 2" stroke="#d04040" stroke-width="2" stroke-dasharray="2.5 2"/><rect x="6.5" y="6.5" width="3.5" height="3.5" fill="#30a030" stroke="#1a5a1a" stroke-width=".5"/></svg>
<svg style="left:711px;top:386px" width="16" height="16" viewBox="0 0 16 16"><circle cx="5" cy="8" r="1.8" fill="#30a030"/><path d="M3 14 H12 V5" stroke="#444" fill="none"/></svg>
<svg style="left:711px;top:407px" width="16" height="16" viewBox="0 0 16 16"><path d="M5 5 V11 M2 8 H8" stroke="#222" stroke-width="1.3"/><path d="M2 14 H13 V3" stroke="#444" stroke-dasharray="1.5 1" fill="none"/></svg>
<div class="a" style="left:711px;top:432px;width:18px;height:1px;background:#c0c6d0"></div>
<svg style="left:712px;top:440px" width="16" height="16" viewBox="0 0 16 16"><rect x="3.5" y="1.5" width="9" height="13" fill="url(#gpg)" stroke="#333"/><defs><linearGradient id="gpg" x1="0" y1="0" x2="1" y2="0"><stop offset="0" stop-color="#fff"/><stop offset="1" stop-color="#aaa"/></linearGradient></defs></svg>
<div class="a" style="left:709px;top:456px;width:22px;height:20px;border:1px solid #6e6e6e;border-radius:3px;background:linear-gradient(#d9dde6,#c4cad6 50%,#bcc3d1)"></div>
<svg style="left:712px;top:458px" width="16" height="16" viewBox="0 0 16 16"><path d="M4 1 V15 M8 1 V15 M12 1 V15 M1 4 H15 M1 8 H15 M1 12 H15" stroke="#1010ff" stroke-width="1.5"/></svg>
<div class="a" style="left:709px;top:480px;width:22px;height:20px;border:1px solid #6e6e6e;border-radius:3px;background:linear-gradient(#d9dde6,#c4cad6 50%,#bcc3d1)"></div>
<svg style="left:712px;top:482px" width="16" height="16" viewBox="0 0 16 16"><path d="M3 2 V14 M13 2 V14" stroke="#2040e0" stroke-width="1.8"/><path d="M6 14 L10 2" stroke="#2040e0" stroke-width="1.6"/></svg>
<svg style="left:0;top:0" width="739" height="599">
<defs><filter id="er" x="-5%" y="-5%" width="110%" height="110%"><feMorphology operator="erode" radius="2"/></filter></defs>
<g fill="#000" stroke="none">
<path fill-rule="evenodd" d="M321.8 215.85 A29.35 28.15 0 1 0 380.5 215.85 A29.35 28.15 0 1 0 321.8 215.85Z M334.75 217 A16 16 0 1 1 366.75 217 A16 16 0 1 1 334.75 217Z"/>
<path d="M341.6 238 H360 V262 H341.6Z"/>
<ellipse cx="283.75" cy="267.65" rx="12.75" ry="19.25"/>
<ellipse cx="418.1" cy="267.65" rx="12.4" ry="19.25"/>
<path d="M292 258 Q300 260 310 259.6 H392 Q402 260 410 258 V276.8 Q402 275 392 275.4 H310 Q300 275 292 276.8Z"/>
<rect x="334.3" y="256.4" width="34.1" height="22.4" rx="3.5"/>
<path d="M253.7 322.8 L302.3 347.5 L293 354.9 L282.1 355.8 C296 373 309 387 325.2 389.4 C334 390.5 337.5 378 338 350 C339 320 340.3 300 340.6 266 L361.8 266 C362.1 300 363.4 320 364.4 350 C364.9 378 368.4 390.5 377.2 389.4 C393.4 387 406.4 373 420.3 355.8 L409.4 354.9 L400.1 347.5 L448.7 322.8 L446 384.2 L433.1 363.1 C421.1 393.1 397.1 428.3 351.2 428.3 C305.3 428.3 281.3 393.1 269.3 363.1 L256.4 384.2 Z"/>
</g>
<g fill="#2e446d" stroke="none" filter="url(#er)">
<path fill-rule="evenodd" d="M321.8 215.85 A29.35 28.15 0 1 0 380.5 215.85 A29.35 28.15 0 1 0 321.8 215.85Z M334.75 217 A16 16 0 1 1 366.75 217 A16 16 0 1 1 334.75 217Z"/>
<path d="M341.6 238 H360 V262 H341.6Z"/>
<ellipse cx="283.75" cy="267.65" rx="12.75" ry="19.25"/>
<ellipse cx="418.1" cy="267.65" rx="12.4" ry="19.25"/>
<path d="M292 258 Q300 260 310 259.6 H392 Q402 260 410 258 V276.8 Q402 275 392 275.4 H310 Q300 275 292 276.8Z"/>
<rect x="334.3" y="256.4" width="34.1" height="22.4" rx="3.5"/>
<path d="M253.7 322.8 L302.3 347.5 L293 354.9 L282.1 355.8 C296 373 309 387 325.2 389.4 C334 390.5 337.5 378 338 350 C339 320 340.3 300 340.6 266 L361.8 266 C362.1 300 363.4 320 364.4 350 C364.9 378 368.4 390.5 377.2 389.4 C393.4 387 406.4 373 420.3 355.8 L409.4 354.9 L400.1 347.5 L448.7 322.8 L446 384.2 L433.1 363.1 C421.1 393.1 397.1 428.3 351.2 428.3 C305.3 428.3 281.3 393.1 269.3 363.1 L256.4 384.2 Z"/>
</g>
<g stroke="#fff" fill="none" stroke-width="2" stroke-linecap="round" stroke-linejoin="round">
<path d="M339.5 194.5 Q351 190.5 365 195" stroke-width="2.6"/>
<path d="M357.4 246 V259.4"/>
<path d="M337.5 267 V259.4 H364.7 V274 H357.4"/>
<path d="M357.4 274 L361 378"/>
<path d="M297 264.7 L330.6 263.7 M369.6 263.7 L403.7 263"/>
<path d="M259.5 332 L288.6 347 M441.4 332 L413.8 347"/>
</g>
<ellipse cx="287" cy="256.5" rx="3.6" ry="3" fill="#fff"/>
<ellipse cx="421.5" cy="256.5" rx="3.6" ry="3" fill="#fff"/>
</svg>
<svg style="left:0;top:0" width="739" height="599"><rect x="253.4" y="187.4" width="197" height="243.2" fill="none" stroke="#858585" stroke-width="1.3"/><g fill="#000"><g id="hc"><path d="M243 177 H249.5 L247.5 179 L252 183.5 L250.5 185 L246 180.5 L243 183.5Z"/><path d="M252.5 186.5 H246 L248 184.5 L243.5 180 L245 178.5 L249.5 183 L252.5 180Z"/></g><use href="#hc" transform="translate(703 0) scale(-1 1)"/><use href="#hc" transform="translate(0 617) scale(1 -1)"/><use href="#hc" transform="translate(703 617) scale(-1 -1)"/><g id="hv"><path d="M351.5 176 L355.5 180.5 H353 V182.5 H355.5 L351.5 187 L347.5 182.5 H350 V180.5 H347.5Z"/></g><use href="#hv" transform="translate(0 253)"/><g id="hh"><path d="M451 308.5 L455.5 304.5 V307 H457.5 V304.5 L461.5 308.5 L457.5 312.5 V310 H455.5 V312.5Z"/></g><use href="#hh" transform="translate(-208 0)"/></g></svg>
<div class="a" style="left:8px;top:535px;width:724px;height:1px;background:#e8e8e8"></div>
<div class="a" style="left:8px;top:536px;width:710px;height:1px;background:#222"></div>
<svg style="left:0;top:0" width="739" height="599"><rect x="24" y="537" width="16" height="16" fill="#000000"/><rect x="40" y="537" width="16" height="16" fill="#1a1a1a"/><rect x="56" y="537" width="16" height="16" fill="#333333"/><rect x="72" y="537" width="15" height="16" fill="#4d4d4d"/><rect x="87" y="537" width="16" height="16" fill="#666666"/><rect x="103" y="537" width="16" height="16" fill="#808080"/><rect x="119" y="537" width="16" height="16" fill="#999999"/><rect x="135" y="537" width="16" height="16" fill="#b3b3b3"/><rect x="151" y="537" width="16" height="16" fill="#cccccc"/><rect x="167" y="537" width="16" height="16" fill="#e6e6e6"/><rect x="183" y="537" width="16" height="16" fill="#ececec"/><rect x="199" y="537" width="15" height="16" fill="#f2f2f2"/><rect x="214" y="537" width="16" height="16" fill="#f9f9f9"/><rect x="230" y="537" width="16" height="16" fill="#ffffff"/><rect x="246" y="537" width="16" height="16" fill="#800000"/><rect x="262" y="537" width="16" height="16" fill="#ff0000"/><rect x="278" y="537" width="16" height="16" fill="#808000"/><rect x="294" y="537" width="16" height="16" fill="#ffff00"/><rect x="310" y="537" width="16" height="16" fill="#008000"/><rect x="326" y="537" width="15" height="16" fill="#00ff00"/><rect x="341" y="537" width="16" height="16" fill="#008080"/><rect x="357" y="537" width="16" height="16" fill="#00ffff"/><rect x="373" y="537" width="16" height="16" fill="#000080"/><rect x="389" y="537" width="16" height="16" fill="#0000ff"/><rect x="405" y="537" width="16" height="16" fill="#800080"/><rect x="421" y="537" width="16" height="16" fill="#ff00ff"/><rect x="437" y="537" width="15" height="16" fill="#2b0000"/><rect x="452" y="537" width="16" height="16" fill="#550000"/><rect x="468" y="537" width="16" height="16" fill="#800000"/><rect x="484" y="537" width="16" height="16" fill="#aa0000"/><rect x="500" y="537" width="16" height="16" fill="#d40000"/><rect x="516" y="537" width="16" height="16" fill="#ff0000"/><rect x="532" y="537" width="16" height="16" fill="#ff2a2a"/><rect x="548" y="537" width="16" height="16" fill="#ff5555"/><rect x="564" y="537" width="15" height="16" fill="#ff8080"/><rect x="579" y="537" width="16" height="16" fill="#ffaaaa"/><rect x="595" y="537" width="16" height="16" fill="#ffd5d5"/><rect x="611" y="537" width="16" height="16" fill="#280b0b"/><rect x="627" y="537" width="16" height="16" fill="#501616"/><rect x="643" y="537" width="16" height="16" fill="#782121"/><rect x="659" y="537" width="16" height="16" fill="#a02c2c"/><rect x="675" y="537" width="16" height="16" fill="#c83737"/><rect x="691" y="537" width="15" height="16" fill="#d35f5f"/><rect x="706" y="537" width="11" height="16" fill="#de8787"/><rect x="8" y="537" width="16" height="16" fill="#fff"/><path d="M8.5 537.5 L23.5 552.5 M23.5 537.5 L8.5 552.5" stroke="#8a1a1a" stroke-width="1.5"/></svg>
<svg style="left:722px;top:539px" width="6" height="8" viewBox="0 0 6 8"><path d="M5.5 0.5 L1 4 L5.5 7.5Z" fill="#111"/></svg>
<div class="a" style="left:8px;top:553px;width:710px;height:2px;background:#f8f8f8"></div>
<div class="a" style="left:8px;top:555px;width:710px;height:13px;background:linear-gradient(#e4e4e4,#f0f0f0 50%,#e8e8e8)"></div>
<svg style="left:10px;top:558px" width="5" height="8" viewBox="0 0 5 8"><path d="M4.5 0.5 L0.5 4 L4.5 7.5Z" fill="#999"/></svg>
<div class="a" style="left:22px;top:555px;width:68px;height:13px;border:1px solid #9a9a9a;border-radius:2px;background:linear-gradient(#f4f4f4,#e4e4e4 45%,#d2d2d2)"></div>
<svg style="left:52px;top:557px" width="8" height="7" viewBox="0 0 8 7"><path d="M1 0 V7 M4 0 V7 M7 0 V7" stroke="#555"/></svg>
<svg style="left:710px;top:558px" width="5" height="8" viewBox="0 0 5 8"><path d="M0.5 0.5 L4.5 4 L0.5 7.5Z" fill="#555"/></svg>
<div class="a" style="left:8px;top:568px;width:723px;height:24px;background:#f0f0f0"></div>
<div class="t" style="left:9px;top:569px;font-size:10px;letter-spacing:-0.310px;color:#222;font-family:'Liberation Sans',sans-serif;font-weight:normal;">Fill:</div>
<div class="t" style="left:9px;top:581px;font-size:10px;letter-spacing:-0.383px;color:#222;font-family:'Liberation Sans',sans-serif;font-weight:normal;">Stroke:</div>
<div class="t" style="left:63px;top:569px;font-size:10px;letter-spacing:-0.556px;color:#111;font-family:'Liberation Sans',sans-serif;font-weight:bold;">Unset</div>
<div class="t" style="left:63px;top:581px;font-size:10px;letter-spacing:-0.556px;color:#111;font-family:'Liberation Sans',sans-serif;font-weight:bold;">Unset</div>
<div class="t" style="left:112px;top:574px;font-size:11px;letter-spacing:-0.806px;color:#222;font-family:'Liberation Sans',sans-serif;font-weight:normal;">O:</div>
<div class="a" style="left:124px;top:571px;width:23px;height:19px;background:#fff;border:1px solid #abadb3;border-top-color:#9a9ca2"></div>
<div class="t" style="left:126.5px;top:574px;font-size:11px;letter-spacing:-1.117px;color:#111;font-family:'Liberation Sans',sans-serif;font-weight:normal;">100</div>
<div class="a" style="left:146px;top:571px;width:9px;height:19px;border:1px solid #c7cdd6;background:linear-gradient(#f6f7f9,#e9ecf1)"></div>
<div class="a" style="left:146px;top:580px;width:9px;height:1px;background:#c7cdd6"></div>
<svg style="left:147px;top:573px" width="7" height="15" viewBox="0 0 7 15"><path d="M1.5 4.5 L3.5 2 L5.5 4.5Z M1.5 10.5 L3.5 13 L5.5 10.5Z" fill="#6a8bb8"/><path d="M0 7.5 H7" stroke="#d0d5dd"/></svg>
<div class="a" style="left:157px;top:569px;width:1px;height:22px;background:#c8c8c8"></div>
<svg style="left:161px;top:573px" width="16" height="14" viewBox="0 0 16 14"><path d="M1.5 9 Q8 2 14.5 9 Q8 14 1.5 9Z" fill="#fff" stroke="#111" stroke-width="1.4"/><circle cx="7.5" cy="8.8" r="3" fill="#111"/><circle cx="6.7" cy="8" r=".8" fill="#fff"/><path d="M3 6 L1.5 4 M5.5 4.5 L5 1.5 M8 4 V1 M10.5 4.5 L11.5 1.5 M13 6 L15 4" stroke="#111" stroke-width="1.1"/></svg>
<svg style="left:182px;top:572px" width="12" height="16" viewBox="0 0 12 16"><path d="M7 8 V4 A2.3 2.3 0 0 1 11.6 4 V6.5" fill="none" stroke="#333" stroke-width="1.3"/><path d="M1 8.5 L9.5 7.5 L10.5 14.5 L2 15.5Z" fill="#f0d860" stroke="#333" stroke-width="1"/><circle cx="6" cy="11.2" r="1" fill="#333"/></svg>
<div class="a" style="left:196px;top:570px;width:65px;height:22px;background:#fff;border:1px solid #abadb3"></div>
<div class="t" style="left:201px;top:575px;font-size:10px;letter-spacing:-0.899px;color:#111;font-family:'Liberation Sans',sans-serif;font-weight:bold;">&#8226;Capa 1</div>
<div class="a" style="left:245px;top:570px;width:16px;height:22px;border:1px solid #888;background:linear-gradient(#f2f2f2,#d6d6d6)"></div>
<svg style="left:249px;top:579px" width="8" height="5" viewBox="0 0 8 5"><path d="M0 0 H8 L4 4.5Z" fill="#111"/></svg>
<div class="t" style="left:266px;top:573px;font-size:11px;letter-spacing:-0.428px;color:#1e1e1e;font-family:'Liberation Sans',sans-serif;font-weight:normal;">Copy selection to clipboard</div>
<div class="a" style="left:599px;top:569px;width:1px;height:22px;background:#c8c8c8"></div>
<div class="t" style="left:602px;top:569px;font-size:9px;letter-spacing:-1.902px;color:#333;font-family:'Liberation Mono',monospace;font-weight:normal;">X:</div>
<div class="t" style="left:602px;top:581px;font-size:9px;letter-spacing:-1.902px;color:#333;font-family:'Liberation Mono',monospace;font-weight:normal;">Y:</div>
<div class="t" style="left:617px;top:569px;font-size:10px;letter-spacing:-0.335px;color:#333;font-family:'Liberation Mono',monospace;font-weight:normal;">-86.43</div>
<div class="t" style="left:617px;top:581px;font-size:10px;letter-spacing:-0.335px;color:#333;font-family:'Liberation Mono',monospace;font-weight:normal;">266.43</div>
<div class="t" style="left:659px;top:574px;font-size:11px;letter-spacing:-0.888px;color:#222;font-family:'Liberation Sans',sans-serif;font-weight:normal;">Z:</div>
<div class="a" style="left:669px;top:571px;width:39px;height:18px;background:#fff;border:1px solid #abadb3;border-top-color:#9a9ca2"></div>
<div class="t" style="left:674px;top:574px;font-size:11px;letter-spacing:-1.283px;color:#111;font-family:'Liberation Sans',sans-serif;font-weight:normal;">140%</div>
<div class="a" style="left:707px;top:571px;width:9px;height:18px;border:1px solid #c7cdd6;background:linear-gradient(#f6f7f9,#e9ecf1)"></div>
<div class="a" style="left:707px;top:580px;width:9px;height:1px;background:#c7cdd6"></div>
<svg style="left:708px;top:573px" width="7" height="14" viewBox="0 0 7 14"><path d="M1.5 4.5 L3.5 2 L5.5 4.5Z M1.5 9.5 L3.5 12 L5.5 9.5Z" fill="#6a8bb8"/><path d="M0 7.0 H7" stroke="#d0d5dd"/></svg>
<svg style="left:722px;top:580px" width="9" height="10" viewBox="0 0 9 10"><g fill="#b0b0b0"><rect x="6" y="1" width="2" height="2"/><rect x="3" y="4" width="2" height="2"/><rect x="6" y="4" width="2" height="2"/><rect x="0" y="7" width="2" height="2"/><rect x="3" y="7" width="2" height="2"/><rect x="6" y="7" width="2" height="2"/></g></svg>
<div class="a" style="left:36px;top:482px;width:210px;height:4px;background:linear-gradient(rgba(0,0,0,.28),rgba(0,0,0,0))"></div>
<div class="a" style="left:244px;top:46px;width:4px;height:438px;background:linear-gradient(90deg,rgba(0,0,0,.25),rgba(0,0,0,0))"></div>
<div class="a" style="left:34px;top:42px;width:210px;height:440px;background:#f0f0f0;border:1px solid #979797;border-top-color:#a8a8a8;border-right-color:#858585;border-bottom-color:#8a8a8a"></div>
<div class="a" style="left:36px;top:132px;width:206px;height:20px;border:1px solid #aed0f0;border-radius:3px;background:linear-gradient(#f2f7fd,#e6effa)"></div>
<div class="t" style="left:60px;top:49.1px;font-size:11px;letter-spacing:-0.574px;color:#8d8d8d;font-family:'Liberation Sans',sans-serif;font-weight:normal;"><span class="u">U</span>ndo</div>
<div class="t" style="left:209.5px;top:49.1px;font-size:11px;letter-spacing:-0.375px;color:#8d8d8d;font-family:'Liberation Sans',sans-serif;font-weight:normal;">Ctrl+Z</div>
<div class="t" style="left:60px;top:69.4px;font-size:11px;letter-spacing:-1.074px;color:#8d8d8d;font-family:'Liberation Sans',sans-serif;font-weight:normal;"><span class="u">R</span>edo</div>
<div class="t" style="left:182.5px;top:69.4px;font-size:11px;letter-spacing:-0.307px;color:#8d8d8d;font-family:'Liberation Sans',sans-serif;font-weight:normal;">Shift+Ctrl+Z</div>
<div class="t" style="left:60px;top:89.5px;font-size:11px;letter-spacing:-0.395px;color:#1e1e1e;font-family:'Liberation Sans',sans-serif;font-weight:normal;">Undo <span class="u">H</span>istory...</div>
<div class="t" style="left:180.5px;top:89.5px;font-size:11px;letter-spacing:-0.242px;color:#1e1e1e;font-family:'Liberation Sans',sans-serif;font-weight:normal;">Shift+Ctrl+H</div>
<div class="t" style="left:60px;top:115.7px;font-size:11px;letter-spacing:-0.372px;color:#1e1e1e;font-family:'Liberation Sans',sans-serif;font-weight:normal;">Cu<span class="u">t</span></div>
<div class="t" style="left:209.5px;top:115.7px;font-size:11px;letter-spacing:-0.478px;color:#1e1e1e;font-family:'Liberation Sans',sans-serif;font-weight:normal;">Ctrl+X</div>
<div class="t" style="left:60px;top:136.5px;font-size:11px;letter-spacing:-0.670px;color:#e0e4ea;font-family:'Liberation Sans',sans-serif;font-weight:normal;"><span class="u">C</span>opy</div>
<div class="t" style="left:210.5px;top:136.5px;font-size:11px;letter-spacing:-0.746px;color:#e0e4ea;font-family:'Liberation Sans',sans-serif;font-weight:normal;">Ctrl+C</div>
<div class="t" style="left:60px;top:156.3px;font-size:11px;letter-spacing:-0.826px;color:#1e1e1e;font-family:'Liberation Sans',sans-serif;font-weight:normal;"><span class="u">P</span>aste</div>
<div class="t" style="left:209.5px;top:156.3px;font-size:11px;letter-spacing:-0.478px;color:#1e1e1e;font-family:'Liberation Sans',sans-serif;font-weight:normal;">Ctrl+V</div>
<div class="t" style="left:60px;top:176.2px;font-size:11px;letter-spacing:-0.781px;color:#1e1e1e;font-family:'Liberation Sans',sans-serif;font-weight:normal;">Paste <span class="u">I</span>n Place</div>
<div class="t" style="left:190.0px;top:176.2px;font-size:11px;letter-spacing:-0.263px;color:#1e1e1e;font-family:'Liberation Sans',sans-serif;font-weight:normal;">Ctrl+Alt+V</div>
<div class="t" style="left:60px;top:196.2px;font-size:11px;letter-spacing:-0.740px;color:#1e1e1e;font-family:'Liberation Sans',sans-serif;font-weight:normal;">Paste <span class="u">S</span>tyle</div>
<div class="t" style="left:182.5px;top:196.2px;font-size:11px;letter-spacing:-0.358px;color:#1e1e1e;font-family:'Liberation Sans',sans-serif;font-weight:normal;">Shift+Ctrl+V</div>
<div class="t" style="left:60px;top:214.5px;font-size:11px;letter-spacing:-0.958px;color:#1e1e1e;font-family:'Liberation Sans',sans-serif;font-weight:normal;">Paste Si<span class="u">z</span>e</div>
<div class="t" style="left:60px;top:238.2px;font-size:11px;letter-spacing:-0.509px;color:#1e1e1e;font-family:'Liberation Sans',sans-serif;font-weight:normal;"><span class="u">F</span>ind...</div>
<div class="t" style="left:209.5px;top:238.2px;font-size:11px;letter-spacing:-0.375px;color:#1e1e1e;font-family:'Liberation Sans',sans-serif;font-weight:normal;">Ctrl+F</div>
<div class="t" style="left:60px;top:265.4px;font-size:11px;letter-spacing:-0.428px;color:#1e1e1e;font-family:'Liberation Sans',sans-serif;font-weight:normal;">Duplic<span class="u">a</span>te</div>
<div class="t" style="left:208.5px;top:265.4px;font-size:11px;letter-spacing:-0.412px;color:#1e1e1e;font-family:'Liberation Sans',sans-serif;font-weight:normal;">Ctrl+D</div>
<div class="t" style="left:60px;top:283.8px;font-size:11px;letter-spacing:-0.548px;color:#1e1e1e;font-family:'Liberation Sans',sans-serif;font-weight:normal;">Clo<span class="u">n</span>e</div>
<div class="t" style="left:60px;top:302.5px;font-size:11px;letter-spacing:-0.561px;color:#1e1e1e;font-family:'Liberation Sans',sans-serif;font-weight:normal;"><span class="u">M</span>ake a Bitmap Copy</div>
<div class="t" style="left:211.5px;top:302.5px;font-size:11px;letter-spacing:-0.120px;color:#1e1e1e;font-family:'Liberation Sans',sans-serif;font-weight:normal;">Alt+B</div>
<div class="t" style="left:60px;top:328.2px;font-size:11px;letter-spacing:-0.633px;color:#1e1e1e;font-family:'Liberation Sans',sans-serif;font-weight:normal;"><span class="u">D</span>elete</div>
<div class="t" style="left:223.0px;top:328.2px;font-size:11px;letter-spacing:-0.668px;color:#1e1e1e;font-family:'Liberation Sans',sans-serif;font-weight:normal;">Del</div>
<div class="t" style="left:60px;top:354.9px;font-size:11px;letter-spacing:-0.475px;color:#1e1e1e;font-family:'Liberation Sans',sans-serif;font-weight:normal;">Select Al<span class="u">l</span></div>
<div class="t" style="left:208.1px;top:354.9px;font-size:11px;letter-spacing:-0.245px;color:#1e1e1e;font-family:'Liberation Sans',sans-serif;font-weight:normal;">Ctrl+A</div>
<div class="t" style="left:60px;top:375.0px;font-size:11px;letter-spacing:-0.500px;color:#1e1e1e;font-family:'Liberation Sans',sans-serif;font-weight:normal;">Select All in All La<span class="u">y</span>ers</div>
<div class="t" style="left:189.1px;top:375.0px;font-size:11px;letter-spacing:-0.173px;color:#1e1e1e;font-family:'Liberation Sans',sans-serif;font-weight:normal;">Ctrl+Alt+A</div>
<div class="t" style="left:60px;top:395.0px;font-size:11px;letter-spacing:-0.488px;color:#1e1e1e;font-family:'Liberation Sans',sans-serif;font-weight:normal;">In<span class="u">v</span>ert Selection</div>
<div class="t" style="left:235.0px;top:395.0px;font-size:11px;letter-spacing:-0.556px;color:#1e1e1e;font-family:'Liberation Sans',sans-serif;font-weight:normal;">!</div>
<div class="t" style="left:60px;top:414.9px;font-size:11px;letter-spacing:-0.724px;color:#1e1e1e;font-family:'Liberation Sans',sans-serif;font-weight:normal;">D<span class="u">e</span>select</div>
<div class="t" style="left:60px;top:439.9px;font-size:11px;letter-spacing:-0.612px;color:#1e1e1e;font-family:'Liberation Sans',sans-serif;font-weight:normal;"><span class="u">G</span>uides Around Page</div>
<div class="t" style="left:60px;top:464.2px;font-size:11px;letter-spacing:-0.474px;color:#1e1e1e;font-family:'Liberation Sans',sans-serif;font-weight:normal;"><span class="u">X</span>ML Editor...</div>
<div class="t" style="left:182.5px;top:464.2px;font-size:11px;letter-spacing:-0.358px;color:#1e1e1e;font-family:'Liberation Sans',sans-serif;font-weight:normal;">Shift+Ctrl+X</div>
<svg style="left:233px;top:215px" width="5" height="8" viewBox="0 0 5 8"><path d="M0.5 0.5 L4.5 4 L0.5 7.5Z" fill="#111"/></svg>
<svg style="left:233px;top:284px" width="5" height="8" viewBox="0 0 5 8"><path d="M0.5 0.5 L4.5 4 L0.5 7.5Z" fill="#111"/></svg>
<svg style="left:40px;top:49px" width="15" height="13" viewBox="0 0 15 13"><path d="M6 1 L1 6 L6 11 V8 Q11 7 13 12 Q14 5 6 4Z" fill="#c8c088" stroke="#a8a060" stroke-width=".6" opacity=".9"/></svg>
<svg style="left:40px;top:69px" width="15" height="13" viewBox="0 0 15 13"><path d="M9 1 L14 6 L9 11 V8 Q4 7 2 12 Q1 5 9 4Z" fill="#8cb47c" stroke="#6a9a5a" stroke-width=".6" opacity=".9"/></svg>
<svg style="left:39px;top:88px" width="16" height="16" viewBox="0 0 16 16"><path d="M6 6 L1 10 L6 14 V11.5 H11 V5.5 H8 V9 H6Z" fill="#f4b820" stroke="#111" stroke-width="1.1" stroke-linejoin="round"/><circle cx="11.5" cy="4.5" r="3.8" fill="#b8d4f0" stroke="#333" stroke-width=".9"/><path d="M11.5 2.5 V4.5 H13" stroke="#111" stroke-width=".9" fill="none"/></svg>
<svg style="left:40px;top:115px" width="14" height="15" viewBox="0 0 14 15"><path d="M2.5 1 L8 9 M11.5 1 L6 9" stroke="#999" stroke-width="1.6"/><circle cx="3.5" cy="11.5" r="3.2" fill="#c89038" stroke="#8a5a10"/><circle cx="10.5" cy="11.5" r="3.2" fill="#c89038" stroke="#8a5a10"/></svg>
<svg style="left:40px;top:135px" width="14" height="14" viewBox="0 0 14 14"><g opacity=".45"><rect x="0.5" y="0.5" width="9" height="9" fill="#fff" stroke="#555"/><path d="M3.5 3.5 H12.5 V11 L10.5 13.5 H3.5Z" fill="#fff" stroke="#555"/><path d="M5.5 6 H10.5 M5.5 8 H10.5 M5.5 10 H9" stroke="#777"/></g></svg>
<svg style="left:41px;top:155px" width="13" height="14" viewBox="0 0 13 14"><rect x="0.5" y="1.5" width="11" height="12" rx="1.5" fill="#c08a40" stroke="#6a4a20"/><path d="M3 3.5 H7.5 L9.5 5.5 V11.5 H3Z" fill="#f8f8f8" stroke="#aaa" stroke-width=".5"/><rect x="3.5" y="0.5" width="5" height="2.5" rx="1" fill="#aaa" stroke="#555" stroke-width=".6"/><path d="M4.5 7 H8 M4.5 9 H8" stroke="#bbb" stroke-width=".8"/></svg>
<svg style="left:40px;top:175px" width="14" height="14" viewBox="0 0 14 14"><rect x="0.5" y="1.5" width="9" height="12" fill="#f0c020" stroke="#222"/><rect x="3" y="0" width="4" height="3" fill="#333"/><rect x="5.5" y="5.5" width="8" height="8" fill="#e8e8e8" stroke="#222"/><path d="M9.5 7 V11 M7.5 9.5 L9.5 11.5 L11.5 9.5" stroke="#111" fill="none"/></svg>
<svg style="left:40px;top:195px" width="14" height="14" viewBox="0 0 14 14"><rect x="0.5" y="1.5" width="9" height="12" fill="#f0c020" stroke="#222"/><rect x="3" y="0" width="4" height="3" fill="#333"/><rect x="5.5" y="5.5" width="8" height="8" fill="#e8e8e8" stroke="#222"/><rect x="6.5" y="6.5" width="6" height="6" fill="#b8d0e8"/></svg>
<svg style="left:40px;top:239px" width="14" height="13" viewBox="0 0 14 13"><circle cx="5.5" cy="5.5" r="4.5" fill="#e8eef4" stroke="#777" stroke-width="1.2"/><path d="M9 9 L13 12.5" stroke="#666" stroke-width="2"/></svg>
<svg style="left:40px;top:264px" width="14" height="14" viewBox="0 0 14 14"><rect x="0.5" y="0.5" width="8" height="8" fill="#c8dcf0" stroke="#444"/><rect x="4.5" y="4.5" width="9" height="9" fill="#c8dcf0" stroke="#444"/></svg>
<svg style="left:40px;top:300px" width="14" height="14" viewBox="0 0 14 14"><rect x="0.5" y="3.5" width="13" height="10" rx="1" fill="#222"/><rect x="4" y="1" width="6" height="3" fill="#222"/><circle cx="7" cy="8.5" r="3" fill="#ddd" stroke="#111"/></svg>
<svg style="left:40px;top:327px" width="14" height="14" viewBox="0 0 14 14"><ellipse cx="7" cy="3" rx="5.5" ry="2.5" fill="#888" stroke="#444"/><path d="M2 3 L3 12 Q7 14 11 12 L12 3" fill="#9a9a9a" stroke="#444"/><path d="M5 5 V12 M9 5 V12" stroke="#666"/></svg>
<svg style="left:40px;top:354px" width="13" height="14" viewBox="0 0 13 14"><path d="M1.5 0.5 H8 L11.5 4 V13.5 H1.5Z" fill="#fff" stroke="#999"/><path d="M3.5 5.5 H7 M3.5 8 H9.5 M3.5 10.5 H9.5" stroke="#3a6ab8" stroke-width="1.2"/><path d="M3.5 5 V11" stroke="#3a6ab8" stroke-width="1"/></svg>
<svg style="left:40px;top:374px" width="14" height="14" viewBox="0 0 14 14"><rect x="0.5" y="0.5" width="13" height="13" fill="none" stroke="#222" stroke-dasharray="1.5 1"/><path d="M3 5 L7 3 L11 5 L7 7Z M3 7.5 L7 9.5 L11 7.5 M3 10 L7 12 L11 10" stroke="#555" stroke-width=".9" fill="#eee"/></svg>
<svg style="left:40px;top:394px" width="14" height="14" viewBox="0 0 14 14"><rect x="0.5" y="0.5" width="13" height="13" fill="none" stroke="#222" stroke-dasharray="1.5 1"/><rect x="3.5" y="3.5" width="7" height="7" fill="#e6ecf4" stroke="#d04040" stroke-dasharray="1.5 1"/></svg>
<svg style="left:40px;top:414px" width="14" height="14" viewBox="0 0 14 14"><rect x="0.5" y="0.5" width="13" height="13" fill="none" stroke="#d03030" stroke-dasharray="1.5 1"/><rect x="2.5" y="6.5" width="6" height="5" fill="#f0c030" stroke="#555"/><circle cx="8" cy="5.5" r="3.5" fill="#d0e0f0" stroke="#555"/></svg>
<svg style="left:40px;top:463px" width="14" height="14" viewBox="0 0 14 14"><rect x="0.5" y="0.5" width="13" height="13" fill="#f8f8f8" stroke="#333"/><rect x="0.5" y="0.5" width="13" height="2.5" fill="#777"/><path d="M5.5 5.5 L3 8 L5.5 10.5 M8.5 5.5 L11 8 L8.5 10.5" fill="none" stroke="#333"/></svg>
<svg style="left:200px;top:146px" width="12" height="18" viewBox="0 0 12 18"><path d="M1 1 V14 L4 11 L6.5 16.5 L8.5 15.5 L6 10 H10Z" fill="#fff" stroke="#333"/></svg></body></html>
